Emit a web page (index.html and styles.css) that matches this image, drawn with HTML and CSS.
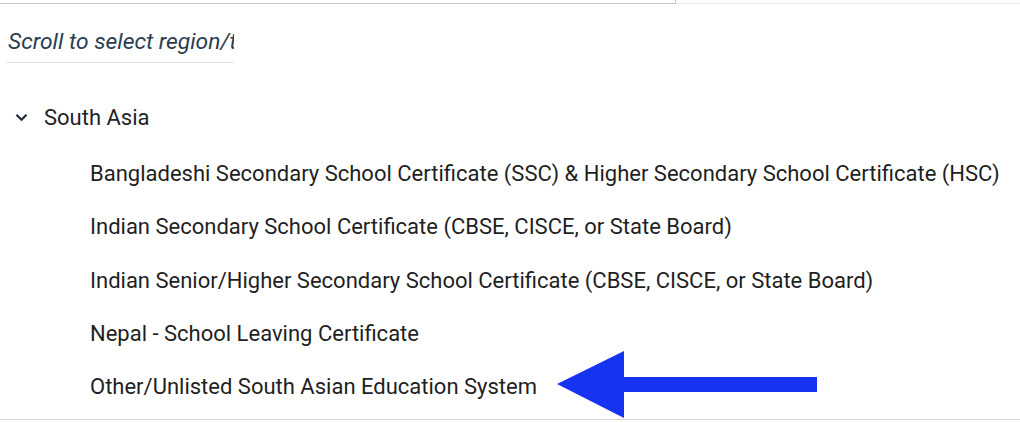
FILE: index.html
```html
<!DOCTYPE html>
<html>
<head>
<meta charset="utf-8">
<link rel="stylesheet" href="styles.css">
</head>
<body>
<div class="page">
  <div class="topbar">
    <div class="top-left"></div>
    <div class="top-right"></div>
  </div>
  <div class="search">
    <div class="search-field">Scroll to select region/type</div>
  </div>
  <div class="tree">
    <div class="group">
      <svg class="chev" width="13" height="9" viewBox="0 0 13 9"><path d="M1.5 1.8 L6.5 6.8 L11.5 1.8" fill="none" stroke="#1f2b3a" stroke-width="2.2"/></svg>
      <span>South Asia</span>
    </div>
    <ul class="items">
      <li>Bangladeshi Secondary School Certificate (SSC) &amp; Higher Secondary School Certificate (HSC)</li>
      <li>Indian Secondary School Certificate (CBSE, CISCE, or State Board)</li>
      <li>Indian Senior/Higher Secondary School Certificate (CBSE, CISCE, or State Board)</li>
      <li>Nepal - School Leaving Certificate</li>
      <li>Other/Unlisted South Asian Education System</li>
    </ul>
  </div>
  <svg class="arrow" width="270" height="72" viewBox="0 0 270 72"><polygon points="0,33 67,0 67,26 260,26 260,41 67,41 67,67" fill="#1733f2"/></svg>
</div>
</body>
</html>
```
FILE: styles.css
```css
html, body {
  margin: 0;
  padding: 0;
  background: #fff;
}
.page {
  position: relative;
  width: 1020px;
  height: 422px;
  overflow: hidden;
  font-family: Roboto, "Liberation Sans", sans-serif;
}
.topbar {
  display: flex;
  height: 4px;
}
.top-left {
  width: 675px;
  border-bottom: 1px solid #c8c8c8;
  border-right: 1px solid #c8c8c8;
}
.top-right {
  flex: 1;
  border-bottom: 1px solid #e8e8e8;
}
.search {
  padding: 22px 0 0 6px;
}
.search-field {
  width: 228px;
  height: 37px;
  box-sizing: border-box;
  padding-left: 2px;
  font-size: 22.8px;
  font-style: italic;
  color: #2b3d4f;
  white-space: nowrap;
  overflow: hidden;
  line-height: 32px;
  border-bottom: 1px solid #dfe4e8;
}
.tree {
  padding-top: 40px;
  border-bottom: 1px solid #d4d4d4;
  height: 357px;
  box-sizing: border-box;
}
.group {
  display: flex;
  align-items: center;
  gap: 16px;
  padding-left: 15px;
  height: 28px;
  font-size: 22px;
  color: #1f2328;
}
.chev {
  display: block;
}
.items {
  list-style: none;
  margin: 0;
  padding: 29px 0 0 90px;
}
.items li {
  height: 53.3px;
  line-height: 28px;
  font-size: 22px;
  color: #1f1f1f;
  white-space: nowrap;
}
.arrow {
  position: absolute;
  left: 557px;
  top: 351px;
}
```
